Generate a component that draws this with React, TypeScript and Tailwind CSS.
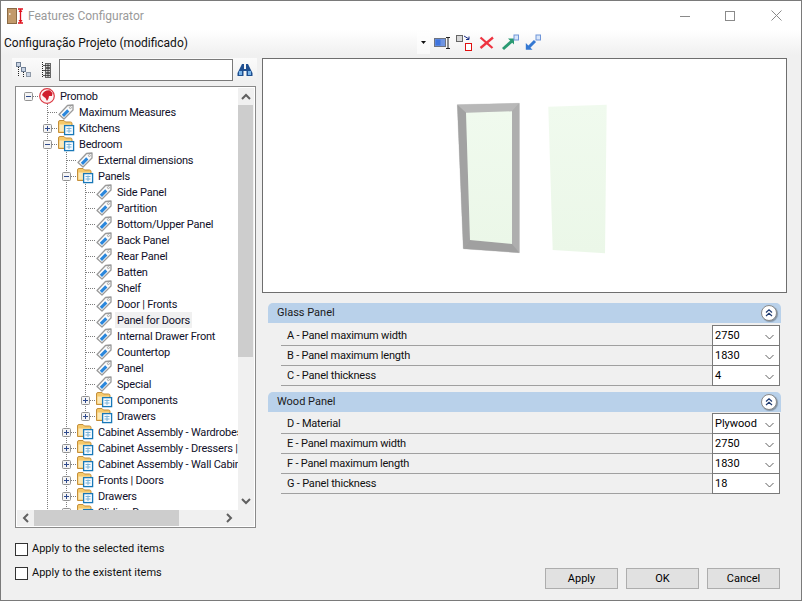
import React from "react";

type Node = { label: string; level: number; kind: "root" | "tag" | "folder"; exp?: "+" | "-"; last?: boolean; sel?: boolean };

const nodes: Node[] = [
  { label: "Promob", level: 0, kind: "root", exp: "-" },
  { label: "Maximum Measures", level: 1, kind: "tag" },
  { label: "Kitchens", level: 1, kind: "folder", exp: "+" },
  { label: "Bedroom", level: 1, kind: "folder", exp: "-" },
  { label: "External dimensions", level: 2, kind: "tag" },
  { label: "Panels", level: 2, kind: "folder", exp: "-" },
  { label: "Side Panel", level: 3, kind: "tag" },
  { label: "Partition", level: 3, kind: "tag" },
  { label: "Bottom/Upper Panel", level: 3, kind: "tag" },
  { label: "Back Panel", level: 3, kind: "tag" },
  { label: "Rear Panel", level: 3, kind: "tag" },
  { label: "Batten", level: 3, kind: "tag" },
  { label: "Shelf", level: 3, kind: "tag" },
  { label: "Door | Fronts", level: 3, kind: "tag" },
  { label: "Panel for Doors", level: 3, kind: "tag", sel: true },
  { label: "Internal Drawer Front", level: 3, kind: "tag" },
  { label: "Countertop", level: 3, kind: "tag" },
  { label: "Panel", level: 3, kind: "tag" },
  { label: "Special", level: 3, kind: "tag" },
  { label: "Components", level: 3, kind: "folder", exp: "+" },
  { label: "Drawers", level: 3, kind: "folder", exp: "+", last: true },
  { label: "Cabinet Assembly - Wardrobes", level: 2, kind: "folder", exp: "+" },
  { label: "Cabinet Assembly - Dressers | Chests", level: 2, kind: "folder", exp: "+" },
  { label: "Cabinet Assembly - Wall Cabinets", level: 2, kind: "folder", exp: "+" },
  { label: "Fronts | Doors", level: 2, kind: "folder", exp: "+" },
  { label: "Drawers", level: 2, kind: "folder", exp: "+" },
  { label: "Sliding Doors", level: 2, kind: "folder", exp: "+" },
];

const DOT = "#7d7d7d";

function Guide({ on }: { on: boolean }) {
  return (
    <svg width="19" height="16" className="shrink-0 block">
      {on && <line x1="9.5" y1="0" x2="9.5" y2="16" stroke={DOT} strokeDasharray="1 1" />}
    </svg>
  );
}

function Connector({ node }: { node: Node }) {
  const isRoot = node.level === 0;
  return (
    <svg width="19" height="16" className="shrink-0 block">
      {!isRoot && <line x1="9.5" y1="0" x2="9.5" y2={node.last ? 8 : 16} stroke={DOT} strokeDasharray="1 1" />}
      <line x1="10" y1="8.5" x2="19" y2="8.5" stroke={DOT} strokeDasharray="1 1" />
      {node.exp && (
        <g>
          <rect x="5.5" y="4.5" width="8" height="8" rx="1" fill="#f4f4f4" stroke="#929292" />
          <line x1="7" y1="8.5" x2="12" y2="8.5" stroke="#2f4a8c" />
          {node.exp === "+" && <line x1="9.5" y1="6" x2="9.5" y2="11" stroke="#2f4a8c" />}
        </g>
      )}
    </svg>
  );
}

function TagIcon() {
  return (
    <svg width="16" height="16" viewBox="0 0 16 16" className="shrink-0 block">
      <path d="M1 10.5 L9.5 1.5 L15 1 L15 6 L6 15 Z" fill="#fbfbfb" stroke="#9a9a9a" strokeWidth="1.3" strokeLinejoin="round" />
      <path d="M3.8 10.7 L9.2 5.3 L11.4 7.5 L6 12.9 Z" fill="#2a87dc" />
      <circle cx="12.4" cy="3.6" r="1" fill="#fff" stroke="#8d8d8d" strokeWidth="0.7" />
    </svg>
  );
}

function FolderIcon() {
  return (
    <svg width="16" height="16" viewBox="0 0 16 16" className="shrink-0 block overflow-visible">
      <path d="M0.5 2 Q0.5 0.5 2 0.5 H6 L7.5 2 H12.5 Q14 2 14 3.5 V12.5 H0.5 Z" fill="#f6c96a" stroke="#c48f3a" />
      <path d="M1.5 4.5 H13 V11.5 H1.5 Z" fill="#fce9b8" />
      <rect x="6.6" y="5.6" width="9" height="9" fill="#f7fbff" stroke="#1878b8" strokeWidth="1.3" />
      <path d="M8.5 8.5 H13.5 M8.5 11 H13.5 M11 7.5 V13" stroke="#7ab4d8" strokeWidth="1" />
    </svg>
  );
}

function RootIcon() {
  return (
    <svg width="16" height="16" viewBox="0 0 16 16" className="shrink-0 block">
      <circle cx="8" cy="8" r="7.3" fill="#fdf3f3" stroke="#dc3a44" strokeWidth="1.2" />
      <path d="M3 7 C4 3.5 8 1.8 11 2.5 L13.5 5 L13 8 L10 8 L9.5 10.5 L8 13 L6.5 10 L5 9 Z" fill="#d01f2e" />
    </svg>
  );
}

function TreeRow({ node }: { node: Node }) {
  const guides = Array.from({ length: node.level }, (_, i) => i > 0);
  return (
    <div className="flex items-center h-4 pl-[2px] whitespace-nowrap">
      {guides.map((on, i) => (
        <Guide key={i} on={on} />
      ))}
      <Connector node={node} />
      <span className="ml-[1px] shrink-0">
        {node.kind === "root" ? <RootIcon /> : node.kind === "tag" ? <TagIcon /> : <FolderIcon />}
      </span>
      <span className={`ml-[3px] px-[2px] h-4 leading-[18px] shrink-0 ${node.sel ? "bg-[#f0f0f0]" : ""}`}>{node.label}</span>
    </div>
  );
}

function Arrow({ d }: { d: string }) {
  return (
    <svg width="16" height="16" viewBox="0 0 16 16" className="block">
      <path d={d} fill="none" stroke="#606060" strokeWidth="2" />
    </svg>
  );
}

function Combo({ value }: { value: string }) {
  return (
    <div className="w-[68px] h-[21px] -mb-px shrink-0 bg-white border border-[#7a7a7a] flex items-center justify-between pl-[2px] pr-[5px] text-black">
      <span className="leading-none">{value}</span>
      <svg width="9" height="6" viewBox="0 0 9 6" className="block mt-[2px]">
        <path d="M0.5 1 L4.5 5 L8.5 1" fill="none" stroke="#606060" />
      </svg>
    </div>
  );
}

function Row({ label, value }: { label: string; value: string }) {
  return (
    <div className="h-5 ml-[13px] mr-px flex items-end border-b border-[#a0a0a0]">
      <span className="flex-1 pl-[6px] pt-[2px] self-center tracking-[-0.2px]">{label}</span>
      <Combo value={value} />
    </div>
  );
}

function Group({ title, rows, className, rowsClass }: { title: string; rows: [string, string][]; className: string; rowsClass: string }) {
  return (
    <div className={className}>
      <div className="h-5 rounded-t-[5px] bg-[#b9d1ea] flex items-center justify-between pl-[9px] pr-[4px] text-[#1a1a1a]">
        <span className="pt-px">{title}</span>
        <span className="w-4 h-4 rounded-full bg-white border border-[#8a8a8a] shadow-[1px_1px_1px_rgba(0,0,0,0.3)] flex items-center justify-center">
          <svg width="8" height="8" viewBox="0 0 8 8" className="block">
            <path d="M1 3.5 L4 0.8 L7 3.5 M1 7 L4 4.3 L7 7" fill="none" stroke="#1e3a70" strokeWidth="1.2" />
          </svg>
        </span>
      </div>
      <div className={rowsClass}>
        {rows.map(([l, v]) => (
          <Row key={l} label={l} value={v} />
        ))}
      </div>
    </div>
  );
}

function Btn({ label }: { label: string }) {
  return (
    <div className="w-[73px] h-[21px] pt-px bg-[#e1e1e1] border border-[#adadad] flex items-center justify-center text-black">{label}</div>
  );
}

function Check({ label }: { label: string }) {
  return (
    <div className="flex items-center h-[14px]">
      <span className="w-[13px] h-[13px] bg-white border border-[#333] shrink-0" />
      <span className="ml-[4px]">{label}</span>
    </div>
  );
}

export default function App() {
  return (
    <div
      className="w-[802px] h-[601px] border border-[#7a7a7a] bg-[#f0f0f0] flex flex-col overflow-hidden text-[11px] text-[#111]"
      style={{ fontFamily: "Roboto, 'Liberation Sans', sans-serif" }}
    >
      {/* title bar */}
      <div className="h-[29px] bg-white flex items-center shrink-0 pl-[6px] text-[12px]">
        <svg width="17" height="16" viewBox="0 0 17 16" className="block shrink-0">
          <rect x="0.5" y="0.5" width="9" height="15" fill="#c29a6b" stroke="#8a6a45" />
          <rect x="2" y="5" width="1.5" height="2" fill="#efe3d0" />
          <path d="M13.5 1 V15 M11 1 H16 M11 15 H16" stroke="#e0131f" strokeWidth="1.3" fill="none" />
          <path d="M13.5 1 L11.5 4 H15.5 Z M13.5 15 L11.5 12 H15.5 Z" fill="#e0131f" />
        </svg>
        <span className="ml-[4px] text-[#9a9a9a]">Features Configurator</span>
        <div className="ml-auto flex items-center">
          <svg width="10" height="10" className="block mr-[35px]"><line x1="0" y1="5.5" x2="10" y2="5.5" stroke="#8a8a8a" /></svg>
          <svg width="10" height="10" className="block mr-[36px]"><rect x="0.5" y="0.5" width="9" height="9" fill="none" stroke="#8a8a8a" /></svg>
          <svg width="11" height="11" className="block mr-[19px]"><path d="M0.5 0.5 L10.5 10.5 M10.5 0.5 L0.5 10.5" stroke="#8a8a8a" /></svg>
        </div>
      </div>

      {/* toolbar */}
      <div className="h-[25px] shrink-0 bg-gradient-to-b from-white to-[#f0f0f0] flex items-center text-[12px]">
        <span className="ml-[3px] text-[#111] w-[413px]">Configuração Projeto (modificado)</span>
        <div className="w-[13px] h-[22px] bg-white/60 flex items-center justify-center">
          <svg width="5" height="3" className="block"><path d="M0 0 H5 L2.5 3 Z" fill="#111" /></svg>
        </div>
        <svg width="118" height="20" viewBox="0 0 118 20" className="block ml-[3px]">
          <rect x="1.5" y="5.5" width="11" height="8" fill="#6f95e2" stroke="#6d7380" />
          <rect x="2.5" y="6.5" width="5" height="6" fill="#3f74dd" />
          <path d="M13 4.5 H17 M13 15.5 H17 M15 4.5 V15.5" stroke="#222" fill="none" />
          <rect x="23.5" y="2.5" width="6" height="6" fill="#d8d8d8" stroke="#666" />
          <path d="M31 3 L36 6 M36 3.5 V6.5 H33" stroke="#1b2f86" fill="none" />
          <rect x="32.5" y="10.5" width="6" height="7" fill="#fff" stroke="#e01010" />
          <path d="M47.5 4.5 L59.5 15 M60 4.5 L47.5 15" stroke="#ee3340" strokeWidth="2.3" />
          <path d="M70 16 L79 8" stroke="#2a9a72" strokeWidth="3" />
          <path d="M75 5.5 L81 5.5 L81 11.5 Z" fill="#2a9a72" />
          <rect x="81" y="2" width="4.5" height="5" fill="#d8e6fa" stroke="#6f95d8" />
          <path d="M102 8 L95 15" stroke="#3478d2" strokeWidth="3" />
          <path d="M92.8 10 V16.8 H99.5 Z" fill="#3478d2" />
          <rect x="103" y="2" width="4.5" height="5" fill="#d8e6fa" stroke="#6f95d8" />
        </svg>
      </div>

      {/* main */}
      <div className="flex-1 flex min-h-0">
        {/* left column */}
        <div className="w-[261px] shrink-0 pl-[11px] flex flex-col">
          <div className="mt-[3px] h-[24px] w-[245px] bg-gradient-to-b from-[#fbfbfb] to-[#f0f0f0] flex items-center">
            <svg width="16" height="16" viewBox="0 0 16 16" className="block ml-[4px]">
              <rect x="0.5" y="0.5" width="4" height="4" fill="#c9d4e4" stroke="#6f7f95" />
              <rect x="5.5" y="5.5" width="4" height="4" fill="#c9d4e4" stroke="#6f7f95" />
              <rect x="10.5" y="10.5" width="4" height="4" fill="#c9d4e4" stroke="#8f9aa8" />
              <path d="M2.5 5 V15 M7.5 10 V15" stroke="#222" strokeDasharray="1 1" />
            </svg>
            <svg width="10" height="16" viewBox="0 0 10 16" className="block ml-[10px]">
              <path d="M0.5 0 V16" stroke="#222" strokeDasharray="1 1" />
              <rect x="3.5" y="1.5" width="5" height="4" fill="#d0d0d0" stroke="#666" />
              <rect x="3.5" y="6.5" width="5" height="4" fill="#d0d0d0" stroke="#666" />
              <rect x="3.5" y="11.5" width="5" height="4" fill="#d0d0d0" stroke="#666" />
              <path d="M1 3.5 H8 M1 8.5 H8 M1 13.5 H8 M6 2 V15" stroke="#333" strokeWidth="0.8" />
            </svg>
            <div className="ml-[7px] w-[174px] h-[22px] bg-white border border-[#7a7a7a]" />
            <svg width="16" height="14" viewBox="0 0 16 14" className="block ml-[4px]">
              <path d="M5 1 H7 V6 H9 V1 H11 L15.5 10 V13 H9.5 V8 H6.5 V13 H0.5 V10 Z" fill="#1f4f90" />
              <rect x="2" y="8" width="3" height="4" fill="#79b4e8" />
              <rect x="11" y="8" width="3" height="4" fill="#79b4e8" />
            </svg>
          </div>

          <div className="mt-[4px] ml-[3px] w-[241px] h-[442px] border border-[#8a8a8a] bg-white p-px flex flex-col">
            <div className="flex flex-1 min-h-0">
              <div className="flex-1 min-w-0 overflow-hidden text-[#10102a] tracking-[-0.2px]">
                {nodes.map((n, i) => (
                  <TreeRow key={i} node={n} />
                ))}
              </div>
              <div className="w-4 shrink-0 bg-[#f0f0f0] flex flex-col items-stretch">
                <div className="h-[17px] flex items-center justify-center"><Arrow d="M4 10 L8 6 L12 10" /></div>
                <div className="h-[252px] w-[15px] bg-[#cdcdcd]" />
                <div className="flex-1 flex flex-col justify-end pb-px"><Arrow d="M4 6 L8 10 L12 6" /></div>
              </div>
            </div>
            <div className="h-4 shrink-0 flex bg-[#f0f0f0]">
              <div className="w-[17px] flex items-center justify-center"><Arrow d="M10 4 L6 8 L10 12" /></div>
              <div className="w-[145px] bg-[#cdcdcd]" />
              <div className="flex-1 flex justify-end pr-[1px]"><Arrow d="M6 4 L10 8 L6 12" /></div>
              <div className="w-4" />
            </div>
          </div>

          <div className="ml-[3px] mt-[14px] flex flex-col gap-[10px]">
            <Check label="Apply to the selected items" />
            <Check label="Apply to the existent items" />
          </div>
        </div>

        {/* right column */}
        <div className="flex-1 min-w-0 flex flex-col">
          <div className="mt-[3px] w-[525px] h-[235px] bg-white border border-[#6e6e6e] shrink-0">
            <svg width="523" height="233" viewBox="263 59 523 233" className="block">
              <defs>
                <linearGradient id="g" x1="0" y1="0" x2="0" y2="1">
                  <stop offset="0" stopColor="#f0faee" />
                  <stop offset="1" stopColor="#ebf7e8" />
                </linearGradient>
              </defs>
              <polygon points="457.3,104.7 519.3,103.3 519.3,252.7 463.3,248.7" fill="#adadad" stroke="#cfcfcf" strokeWidth="0.6" />
              <polygon points="457.3,104.7 519.3,103.3 512,111.3 466,112.7" fill="#b8b8b8" />
              <polygon points="457.3,104.7 466,112.7 470,240 463.3,248.7" fill="#a2a2a2" />
              <polygon points="519.3,103.3 512,111.3 512,244 519.3,252.7" fill="#aeaeae" />
              <polygon points="463.3,248.7 470,240 512,244 519.3,252.7" fill="#a0a0a0" />
              <polygon points="466,112.7 512,111.3 512,244 470,240" fill="url(#g)" />
              <polygon points="548.3,106.7 606.7,104.7 605,253.3 552.7,250" fill="url(#g)" />
            </svg>
          </div>
          <div className="ml-[6px] w-[513px]">
            <Group
              className="mt-[10px]"
              rowsClass="mt-[3px]"
              title="Glass Panel"
              rows={[
                ["A - Panel maximum width", "2750"],
                ["B - Panel maximum length", "1830"],
                ["C - Panel thickness", "4"],
              ]}
            />
            <Group
              className="mt-[6px]"
              rowsClass="mt-[2px]"
              title="Wood Panel"
              rows={[
                ["D - Material", "Plywood"],
                ["E - Panel maximum width", "2750"],
                ["F - Panel maximum length", "1830"],
                ["G - Panel thickness", "18"],
              ]}
            />
          </div>
          <div className="mt-auto mb-[11px] ml-[283px] flex gap-[8px]">
            <Btn label="Apply" />
            <Btn label="OK" />
            <Btn label="Cancel" />
          </div>
        </div>
      </div>
    </div>
  );
}
